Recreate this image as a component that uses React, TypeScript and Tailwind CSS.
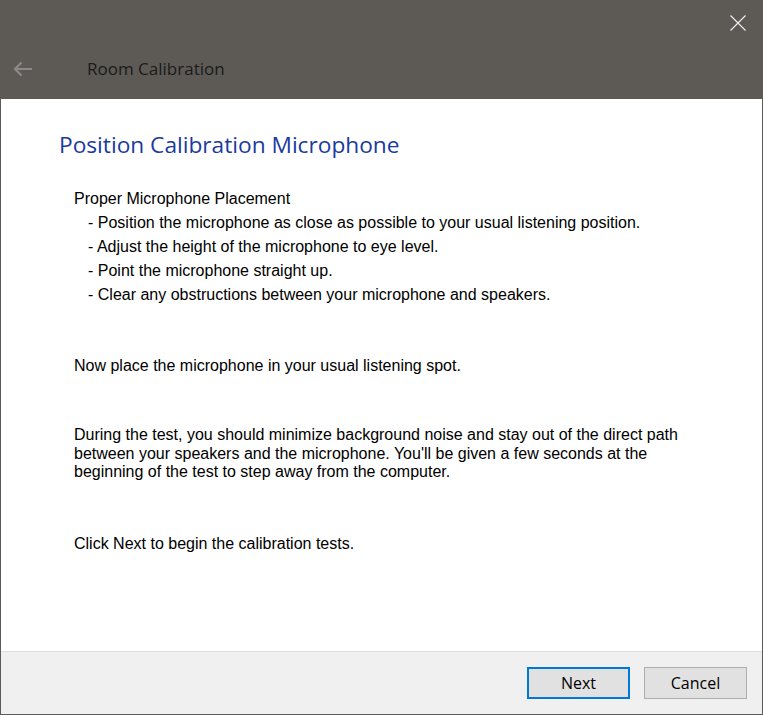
import React from "react";

const segoe = { fontFamily: '"Open Sans", "Noto Sans", sans-serif' };

export default function App() {
  return (
    <div className="w-[763px] h-[715px] flex flex-col bg-white" style={{ fontFamily: '"Liberation Sans", Arial, sans-serif' }}>
      {/* Title bar */}
      <div className="h-[99px] bg-[#5d5a56] flex flex-col shrink-0">
        <div className="h-[45px] flex justify-end pt-[15px] pr-[17px]">
          <svg width="16" height="16" viewBox="0 0 16 16" className="block">
            <path d="M0.5 0.5 L15.5 15.5 M15.5 0.5 L0.5 15.5" stroke="#f2f2f2" strokeWidth="1.1" fill="none" />
          </svg>
        </div>
        <div className="h-[48px] flex items-center pl-[13px]">
          <svg width="20" height="16" viewBox="0 0 20 16" className="block">
            <path d="M19 8 H2 M8.5 1.5 L2 8 L8.5 14.5" stroke="#8c8885" strokeWidth="2.2" fill="none" />
          </svg>
          <span className="ml-[54px] text-[17px] leading-[24px] text-[#1a1a1a]" style={segoe}>
            Room Calibration
          </span>
        </div>
      </div>

      {/* Body */}
      <div className="flex-1 flex flex-col border-l border-r border-b border-[#5b5b5b]">
        <div className="flex-1 bg-white pl-[58px] pt-[31px] text-black">
          <h1 className="text-[22.7px] leading-[30px] text-[#1a3a9e] font-normal" style={segoe}>
            Position Calibration Microphone
          </h1>
          <div className="pl-[15px] text-[16px]">
            <div className="mt-[27px] leading-[24px]">
              <div>Proper Microphone Placement</div>
              <div className="pl-[14px]">- Position the microphone as close as possible to your usual listening position.</div>
              <div className="pl-[14px]">- Adjust the height of the microphone to eye level.</div>
              <div className="pl-[14px]">- Point the microphone straight up.</div>
              <div className="pl-[14px]">- Clear any obstructions between your microphone and speakers.</div>
            </div>
            <div className="mt-[47px] leading-[24px]">Now place the microphone in your usual listening spot.</div>
            <div className="mt-[48px] leading-[18.5px]">
              <div>During the test, you should minimize background noise and stay out of the direct path</div>
              <div>between your speakers and the microphone. You'll be given a few seconds at the</div>
              <div>beginning of the test to step away from the computer.</div>
            </div>
            <div className="mt-[50px] leading-[24px]">Click Next to begin the calibration tests.</div>
          </div>
        </div>
        <div className="h-[63px] shrink-0 border-t border-[#dfdfdf] bg-[#f0f0f0] flex items-center justify-end gap-[14px] pr-[15px]">
          <button className="w-[103px] h-[32px] bg-[#e1e1e1] border-2 border-[#0078d7] text-[16px] text-black leading-none" style={segoe}>
            Next
          </button>
          <button className="w-[103px] h-[32px] bg-[#e1e1e1] border border-[#adadad] text-[16px] text-black leading-none" style={segoe}>
            Cancel
          </button>
        </div>
      </div>
    </div>
  );
}
